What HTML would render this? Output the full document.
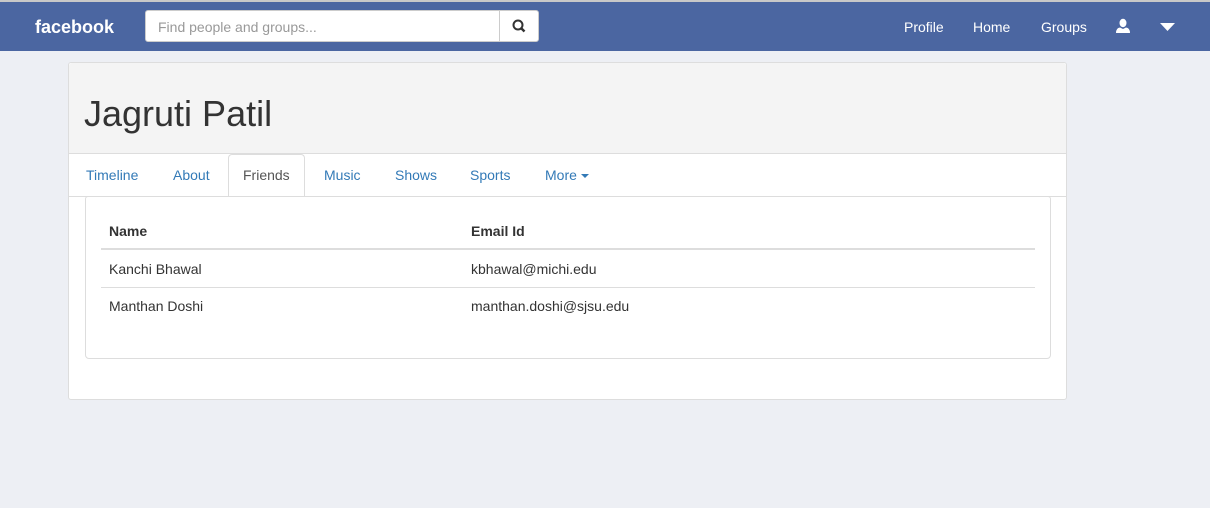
<!DOCTYPE html>
<html><head><style>
body{margin:0;background:#edeff4;font-family:"Liberation Sans",Arial,sans-serif;font-size:14px;color:#333;width:1210px;height:508px;overflow:hidden;position:relative}
.top{position:absolute;left:0;top:0;width:1210px;height:2px;background:#c8c8c8}
.nav{position:absolute;left:0;top:2px;width:1210px;height:49px;background:#4b66a1}
.brand{position:absolute;left:35px;top:15px;color:#fff;font-weight:bold;font-size:18px}
.search{position:absolute;left:145px;top:8px;width:394px;height:32px;background:#fff;border:1px solid #ccc;border-radius:3px;box-sizing:border-box}
.search span{position:absolute;left:12px;top:8px;color:#999;font-size:14px}
.sbtn{position:absolute;right:0;top:0;width:38px;height:30px;border-left:1px solid #ccc}
.nl{position:absolute;top:17px;color:#fff;font-size:14px}
.card{position:absolute;left:68px;top:62px;width:999px;height:338px;background:#fff;border:1px solid #ddd;border-radius:3px;box-sizing:border-box}
.hdr{position:absolute;left:0;top:0;width:997px;height:90px;background:#f4f4f4;border-bottom:1px solid #ddd;border-radius:3px 3px 0 0}
.hdr h1{margin:0;position:absolute;left:15px;top:30px;font-size:36px;font-weight:normal;color:#333}
.tabs{position:absolute;left:0;top:91px;width:997px;height:42px;border-bottom:1px solid #ddd}
.tab{position:absolute;top:13px;color:#337ab7}
.act{position:absolute;left:159px;top:0;width:77px;height:43px;background:#fff;border:1px solid #ddd;border-bottom:none;border-radius:4px 4px 0 0;box-sizing:border-box}
.panel{position:absolute;left:16px;top:133px;width:966px;height:163px;border:1px solid #ddd;border-radius:3px 3px 4px 4px;box-sizing:border-box}
.row{position:absolute;left:15px;width:934px;border-bottom:1px solid #ddd}
.c{position:absolute;top:0}
</style></head><body>
<div class="top"></div>
<div class="nav">
<div class="brand">facebook</div>
<div class="search"><span>Find people and groups...</span><div class="sbtn"><svg width="38" height="30" viewBox="0 0 38 30"><circle cx="18" cy="14" r="4.5" fill="none" stroke="#333" stroke-width="2"/><line x1="21" y1="17" x2="24.5" y2="20.5" stroke="#333" stroke-width="2.5"/></svg></div></div>
<div class="nl" style="left:904px">Profile</div>
<div class="nl" style="left:973px">Home</div>
<div class="nl" style="left:1041px">Groups</div>
<svg style="position:absolute;left:1115px;top:16px" width="16" height="16" viewBox="0 0 16 16"><ellipse cx="8" cy="5" rx="3.5" ry="4.2" fill="#fff"/><path d="M1 15 Q1 10 5 9.5 L8 11 L11 9.5 Q15 10 15 15Z" fill="#fff"/></svg>
<svg style="position:absolute;left:1160px;top:21px" width="15" height="9"><path d="M0 0H15L7.5 8Z" fill="#fff"/></svg>
</div>
<div class="card">
<div class="hdr"><h1>Jagruti Patil</h1></div>
<div class="tabs">
<div class="act"></div>
<div class="tab" style="left:17px">Timeline</div>
<div class="tab" style="left:104px">About</div>
<div class="tab" style="left:174px;color:#555">Friends</div>
<div class="tab" style="left:255px">Music</div>
<div class="tab" style="left:326px">Shows</div>
<div class="tab" style="left:401px">Sports</div>
<div class="tab" style="left:476px">More <svg width="9" height="5" style="vertical-align:middle"><path d="M0 0H8L4 4Z" fill="#337ab7"/></svg></div>
</div>
<div class="panel">
<div class="row" style="top:14px;height:37px;border-bottom:2px solid #ddd"><b class="c" style="left:8px;top:12px">Name</b><b class="c" style="left:370px;top:12px">Email Id</b></div>
<div class="row" style="top:53px;height:37px"><span class="c" style="left:8px;top:11px">Kanchi Bhawal</span><span class="c" style="left:370px;top:11px">kbhawal@michi.edu</span></div>
<div class="row" style="top:91px;height:37px;border:none"><span class="c" style="left:8px;top:10px">Manthan Doshi</span><span class="c" style="left:370px;top:10px">manthan.doshi@sjsu.edu</span></div>
</div>
</div>
</body></html>
